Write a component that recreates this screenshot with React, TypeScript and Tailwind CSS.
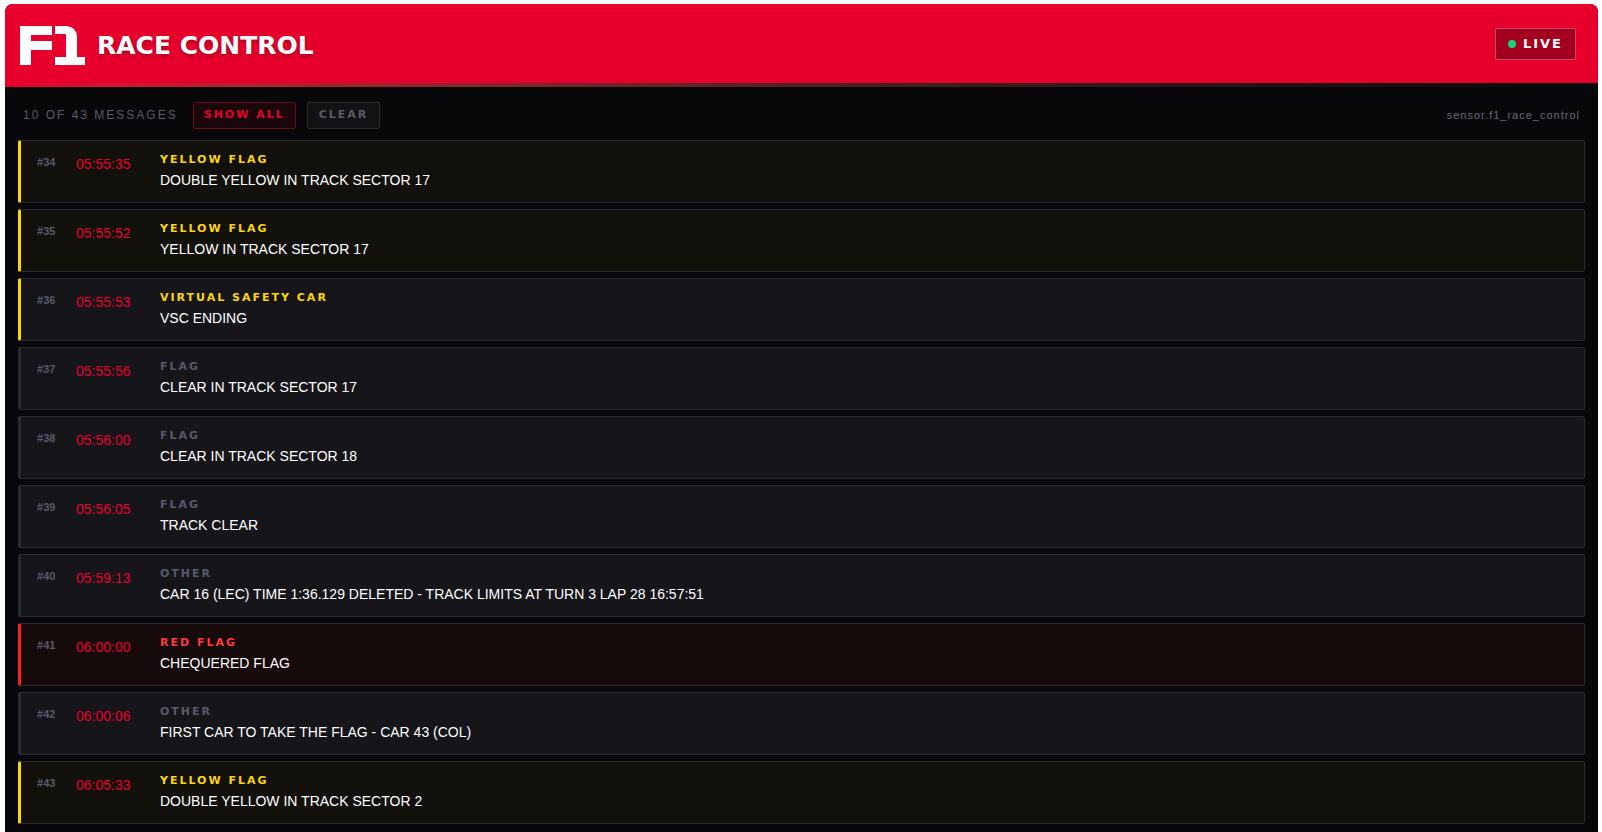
import clsx from "clsx";

type Kind = "yellow" | "vsc" | "red" | "none";

interface RaceMessage {
  id: number;
  time: string;
  kind: Kind;
  label: string;
  text: string;
}

const messages: RaceMessage[] = [
  { id: 34, time: "05:55:35", kind: "yellow", label: "YELLOW FLAG", text: "DOUBLE YELLOW IN TRACK SECTOR 17" },
  { id: 35, time: "05:55:52", kind: "yellow", label: "YELLOW FLAG", text: "YELLOW IN TRACK SECTOR 17" },
  { id: 36, time: "05:55:53", kind: "vsc", label: "VIRTUAL SAFETY CAR", text: "VSC ENDING" },
  { id: 37, time: "05:55:56", kind: "none", label: "FLAG", text: "CLEAR IN TRACK SECTOR 17" },
  { id: 38, time: "05:56:00", kind: "none", label: "FLAG", text: "CLEAR IN TRACK SECTOR 18" },
  { id: 39, time: "05:56:05", kind: "none", label: "FLAG", text: "TRACK CLEAR" },
  { id: 40, time: "05:59:13", kind: "none", label: "OTHER", text: "CAR 16 (LEC) TIME 1:36.129 DELETED - TRACK LIMITS AT TURN 3 LAP 28 16:57:51" },
  { id: 41, time: "06:00:00", kind: "red", label: "RED FLAG", text: "CHEQUERED FLAG" },
  { id: 42, time: "06:00:06", kind: "none", label: "OTHER", text: "FIRST CAR TO TAKE THE FLAG - CAR 43 (COL)" },
  { id: 43, time: "06:05:33", kind: "yellow", label: "YELLOW FLAG", text: "DOUBLE YELLOW IN TRACK SECTOR 2" },
];

const rowStyles: Record<Kind, string> = {
  yellow: "border-l-[#ffd700] bg-[#12110c]",
  vsc: "border-l-[#ffd700] bg-[#15151a]",
  red: "border-l-[#ff1e1e] bg-[#170a0b]",
  none: "border-l-[#2a2a33] bg-[#15151a]",
};

const labelStyles: Record<Kind, string> = {
  yellow: "text-[#ffd700]",
  vsc: "text-[#ffd700]",
  red: "text-[#ff3b3b]",
  none: "text-[#5a5a6a]",
};

const displayFont = "font-['DejaVu_Sans',sans-serif] font-bold";

function F1Logo() {
  return (
    <svg viewBox="0 0 65 39" className="h-[39px] w-[65px] fill-white" role="img" aria-label="F1">
      <path d="M0 0H32V9H11V15H32V24H11V39H0Z" />
      <path d="M35 0H46Q57 1 57 11V31H65V39H35V31H46V8H35Z" />
    </svg>
  );
}

function MessageRow({ message }: { message: RaceMessage }) {
  return (
    <li
      className={clsx(
        "flex h-[63px] rounded-[2px] border border-l-[3px] border-[#2a2a33] px-4 pt-[13px]",
        rowStyles[message.kind]
      )}
    >
      <span className="w-[39px] text-[11px] leading-4 font-bold text-[#5a5a6a]">#{message.id}</span>
      <time className="w-[84px] text-[14px] leading-5 text-[#e8002d]">{message.time}</time>
      <div>
        <div className={clsx("text-[11px] leading-3 tracking-[2px]", displayFont, labelStyles[message.kind])}>
          {message.label}
        </div>
        <p className="mt-1 text-[14px] leading-5 text-white">{message.text}</p>
      </div>
    </li>
  );
}

export default function App() {
  return (
    <div className="min-h-screen bg-white pt-1 pr-1 pl-[5px] font-['Liberation_Sans',Arial,sans-serif]">
      <main className="min-h-[828px] overflow-hidden rounded-t-lg bg-[#08080a]">
        <header className="flex h-[79px] items-center bg-[#e8002d] pr-[22px] pl-[15px]">
          <div className="flex items-center gap-3 pt-1">
            <F1Logo />
            <h1 className={clsx("text-[25px] leading-8 text-white [text-shadow:0_2px_4px_rgba(0,0,0,0.3)]", displayFont)}>
              RACE CONTROL
            </h1>
          </div>
          <div className="ml-auto flex h-8 items-center gap-[7px] rounded-[2px] border border-white/30 bg-[#a3001f] px-3">
            <span className="size-2 rounded-full bg-[#1fd17a]" />
            <span className={clsx("text-[13px] leading-5 tracking-[2px] text-white", displayFont)}>LIVE</span>
          </div>
        </header>
        <div className="h-1 bg-linear-to-r from-[#e8002d] via-[#4d2226] to-[#08080a]" />

        <div className="flex items-center px-[18px] pt-[15px] pb-[11px]">
          <span className="pb-0.5 text-[12px] leading-4 tracking-[2px] text-[#5a5a6a]">10 OF 43 MESSAGES</span>
          <button
            type="button"
            className={clsx("ml-[15px] h-[27px] rounded-[2px] border border-[#6b0a1e] bg-[#1b060c] px-2.5 text-[11px] tracking-[2px] text-[#e8002d]", displayFont)}
          >
            SHOW ALL
          </button>
          <button
            type="button"
            className={clsx("ml-[11px] h-[27px] rounded-[2px] border border-[#2b2b2e] bg-[#121214] px-[11px] text-[11px] tracking-[2px] text-[#5a5a6a]", displayFont)}
          >
            CLEAR
          </button>
          <span className="ml-auto pb-0.5 text-[11px] leading-4 tracking-[1px] text-[#6a6a7a]">sensor.f1_race_control</span>
        </div>

        <ul className="flex flex-col gap-1.5 px-[13px]">
          {messages.map((message) => (
            <MessageRow key={message.id} message={message} />
          ))}
        </ul>
      </main>
    </div>
  );
}
